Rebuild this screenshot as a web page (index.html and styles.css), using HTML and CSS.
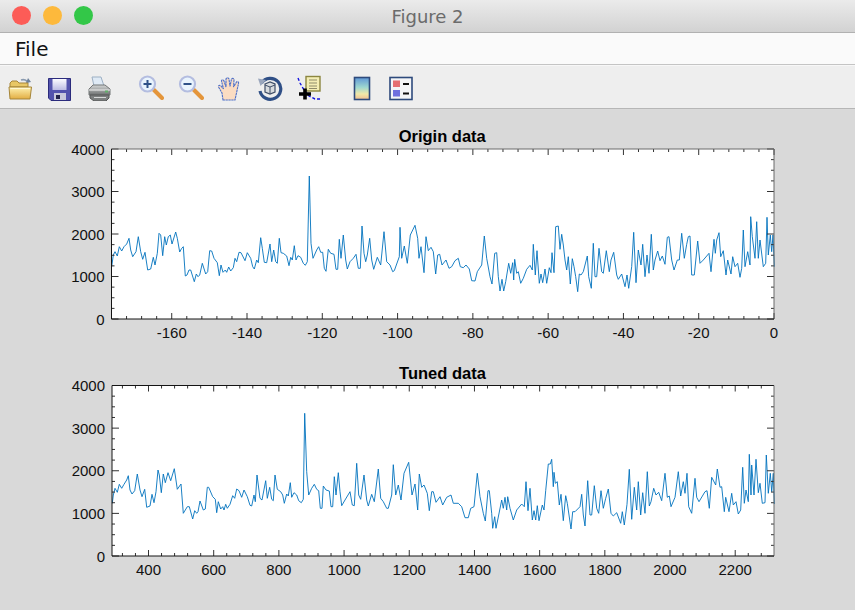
FILE: index.html
```html
<!DOCTYPE html>
<html lang="en">
<head>
  <meta charset="UTF-8">
  <meta name="viewport" content="width=device-width, initial-scale=1.0">
  <title>Figure 2</title>
  <link rel="stylesheet" href="styles.css">
</head>
<body>
  <div class="window">
    <div class="titlebar">
      <div class="lights">
        <span class="light close"></span>
        <span class="light minimize"></span>
        <span class="light zoom"></span>
      </div>
      <span class="window-title">Figure 2</span>
    </div>

    <div class="menubar"><span class="menu-item">File</span></div>

    <div class="toolbar">
      <span class="tool">
        <svg viewBox="0 0 26 26" width="26" height="26">
          <defs>
            <linearGradient id="folder-front" x1="0" y1="0" x2="0" y2="1">
              <stop offset="0" stop-color="#fff2b0"/>
              <stop offset="1" stop-color="#e2ad42"/>
            </linearGradient>
          </defs>
          <path d="M21 8 C20 5 17 4 14 5" fill="none" stroke="#8a9bb0" stroke-width="1.6"/>
          <path d="M21 3 L24 7 L19 8 Z" fill="#6f839c"/>
          <path d="M3 12 V8 L5 6 H10 L12 8 H21 V12 Z" fill="#e8c765" stroke="#a5853a"/>
          <path d="M2 12 H24.5 L23 24 H3 Z" fill="url(#folder-front)" stroke="#a5853a"/>
          <path d="M3.5 13.5 H23" stroke="#fff8d2"/>
        </svg>
      </span>
      <span class="tool">
        <svg viewBox="0 0 26 26" width="26" height="26">
          <defs>
            <linearGradient id="floppy-label" x1="0" y1="0" x2="0" y2="1">
              <stop offset="0" stop-color="#fbfbff"/>
              <stop offset="1" stop-color="#bcbce4"/>
            </linearGradient>
          </defs>
          <path d="M2.5 3.5 H24.5 V25.5 H5 L2.5 23 Z" fill="#5353ad" stroke="#2b2b7c"/>
          <rect x="6.5" y="4" width="14" height="11" fill="url(#floppy-label)"/>
          <rect x="8" y="18" width="12" height="7" fill="#c9c9dc"/>
          <rect x="10" y="20" width="4" height="4" fill="#22224a"/>
        </svg>
      </span>
      <span class="tool">
        <svg viewBox="0 0 26 26" width="26" height="26">
          <defs>
            <linearGradient id="printer-body" x1="0" y1="0" x2="0" y2="1">
              <stop offset="0" stop-color="#d4d6d6"/>
              <stop offset="1" stop-color="#6d7070"/>
            </linearGradient>
          </defs>
          <path d="M6 2 H15 L18 11 H8 Z" fill="#dfeaf5" stroke="#9db0c4"/>
          <path d="M3 14 L7 10 H19 L24 14 V20 H3 Z" fill="url(#printer-body)" stroke="#737676"/>
          <path d="M3 15 H24" stroke="#f2f2f2"/>
          <rect x="19" y="15.5" width="3" height="2" fill="#63b06a"/>
          <path d="M4 20 H23 V23 L20 26 H8 L4 23 Z" fill="#7c7f7f" stroke="#565858"/>
          <path d="M8 22.5 H20" stroke="#d6d8d8"/>
        </svg>
      </span>

      <span class="tool tool-gap">
        <svg viewBox="0 0 26 26" width="26" height="26">
          <path d="M16 15 L24 23" stroke="#e4953a" stroke-width="4" stroke-linecap="round"/>
          <circle cx="9.5" cy="9" r="7.5" fill="#e9f4fd" stroke="#b4bde0" stroke-width="2.2"/>
          <path d="M5.5 9 H13.5 M9.5 5 V13" stroke="#2f5288" stroke-width="2"/>
        </svg>
      </span>
      <span class="tool">
        <svg viewBox="0 0 26 26" width="26" height="26">
          <path d="M16 15 L24 23" stroke="#e4953a" stroke-width="4" stroke-linecap="round"/>
          <circle cx="9.5" cy="9" r="7.5" fill="#e9f4fd" stroke="#b4bde0" stroke-width="2.2"/>
          <path d="M5.5 9 H13.5" stroke="#2f5288" stroke-width="2"/>
        </svg>
      </span>
      <span class="tool">
        <svg viewBox="0 0 26 26" width="26" height="26">
          <path d="M6 25 L5 18 L1.5 12 C1 10 3 10 4 11 L6.5 14 L4.5 6 C4.5 4.5 6.5 4.5 7 6 L9 12 L9 4 C9.5 2.5 11.5 2.5 12 4 L13 11.5 L14.5 4 C15 3 17 3 17 5 L16.5 12 L19.5 7 C20.5 6 22 7 21.5 8.5 L19.5 18 L18 25 Z" fill="#fbdcc2" stroke="#4f70c8" stroke-width="1.1" stroke-dasharray="2.4 .5"/>
        </svg>
      </span>
      <span class="tool">
        <svg viewBox="0 0 26 26" width="26" height="26">
          <path d="M4.5 8 A10.5 10.5 0 1 1 3 16" fill="none" stroke="#2f4f86" stroke-width="3.2"/>
          <path d="M1 3.5 L9 5 L3.5 11 Z" fill="#9aa6bc"/>
          <path d="M8 9 L13 7 L18 9 V17 L13 19 L8 17 Z" fill="#d9dcdf" stroke="#3f4e68" stroke-width="1.2"/>
          <path d="M8 10 L13 12 L18 10 M13 12 V19" fill="none" stroke="#3f4e68"/>
        </svg>
      </span>
      <span class="tool">
        <svg viewBox="0 0 26 26" width="26" height="26">
          <path d="M2 3 L4 8 L8 15 L13 21 L19 24 H25" fill="none" stroke="#1414e0" stroke-width="1.4" stroke-dasharray="3 2"/>
          <rect x="10" y="1.5" width="14" height="14.5" fill="#f4eeb4" stroke="#8c8640" stroke-width="1.4"/>
          <path d="M13 5 H21 M13 8 H21 M13 11 H21 M13 13.5 H21" stroke="#8f8c6a"/>
          <path d="M3 19 H15 M9 13.5 V24.5" stroke="#000" stroke-width="3.6"/>
        </svg>
      </span>

      <span class="tool tool-gap">
        <svg viewBox="0 0 26 26" width="26" height="26">
          <defs>
            <linearGradient id="colorbar-fill" x1="0" y1="0" x2="0" y2="1">
              <stop offset="0" stop-color="#5f97d6"/>
              <stop offset=".45" stop-color="#9fd8d0"/>
              <stop offset=".75" stop-color="#f1e8a8"/>
              <stop offset="1" stop-color="#f0bd90"/>
            </linearGradient>
          </defs>
          <rect x="5.5" y="2.5" width="15" height="22" fill="url(#colorbar-fill)" stroke="#2e4a7c" stroke-width="1.6"/>
        </svg>
      </span>
      <span class="tool">
        <svg viewBox="0 0 26 26" width="26" height="26">
          <rect x="2" y="2.5" width="22" height="22" fill="#f4f5f7" stroke="#2e4a7c" stroke-width="1.6"/>
          <rect x="5" y="5.5" width="7" height="6.5" fill="#e56f72"/>
          <rect x="5" y="15" width="7" height="6.5" fill="#6f70df"/>
          <path d="M15 9 H21 M15 18.5 H21" stroke="#111" stroke-width="2"/>
        </svg>
      </span>
    </div>

    <div class="figure">
      <svg class="plot plot-origin" id="plot-origin" width="855" height="237"></svg>
      <svg class="plot plot-tuned" id="plot-tuned" width="855" height="237"></svg>
    </div>
  </div>

  <script src="chart.js"></script>
</body>
</html>
```

FILE: styles.css
```css
* {
  box-sizing: border-box;
}
html, body {
  margin: 0;
  padding: 0;
  background: #d9d9d9;
}
.window {
  width: 855px;
  height: 610px;
  display: flex;
  flex-direction: column;
  overflow: hidden;
}
.titlebar {
  height: 33px;
  flex: none;
  display: flex;
  align-items: center;
  justify-content: center;
  position: relative;
  background: linear-gradient(#ebebeb, #d2d2d2);
  border-bottom: 1px solid #b1b1b1;
}
.lights {
  position: absolute;
  left: 12px;
  top: 6px;
  display: flex;
  gap: 12px;
}
.light {
  width: 19px;
  height: 19px;
  border-radius: 50%;
}
.light.close {
  background: #fc5c57;
}
.light.minimize {
  background: #fdb93c;
}
.light.zoom {
  background: #33c748;
}
.window-title {
  font-family: "DejaVu Sans", sans-serif;
  font-size: 18px;
  color: #6b6b6b;
}
.menubar {
  height: 32px;
  flex: none;
  display: flex;
  align-items: center;
  padding-left: 15px;
  background: #fafafa;
  border-bottom: 1px solid #c4c4c4;
}
.menu-item {
  font-family: "DejaVu Sans", sans-serif;
  font-size: 20px;
  color: #111;
}
.toolbar {
  height: 44px;
  flex: none;
  display: flex;
  align-items: flex-start;
  padding-top: 9px;
  background: #eeeeee;
  border-top: 1px solid #f7f7f7;
  border-bottom: 1px solid #b6b6b6;
}
.tool {
  width: 39.5px;
  height: 26px;
  display: flex;
  justify-content: center;
}
.tool-gap {
  margin-left: 13px;
}
.figure {
  flex: 1;
  background: #d9d9d9;
  padding-top: 1px;
}
.plot {
  display: block;
}
.plot-origin {
  margin-bottom: 0;
}
.data-line {
  fill: none;
  stroke: #0072bd;
  stroke-width: 0.9;
  stroke-linejoin: round;
}
.axes-bg {
  fill: #fff;
}
.axis-dark {
  stroke: #141414;
  stroke-width: 1;
}
.axis-light {
  stroke: #6a6a6a;
  stroke-width: 1;
}
.tick {
  stroke: #333;
  stroke-width: 1;
}
.tick-label {
  font-family: "Liberation Sans", Arial, sans-serif;
  font-size: 15px;
  fill: #111;
}
.plot-title {
  font-family: "Liberation Sans", Arial, sans-serif;
  font-size: 16.5px;
  font-weight: bold;
  fill: #000;
  text-anchor: middle;
}
```

FILE: chart.js
```js
// traces read off the screenshot at 3x, [originX, originY, x, y, x, y, ...]
const originTrace = [
  [60, 120, 155,440,160,405,165,395,172,408,178,380,185,393,192,380,200,372,207,355,212,390,218,410,228,395,235,350,242,395,248,418,255,397,263,450,272,447,280,412,285,435,292,400,297,340,302,345,308,407,314,350,319,375,325,350,331,345,336,372,347,336,352,355,359,396,365,385,370,380,376,468,381,465,387,450,392,450,403,485,409,462,414,470,419,465,427,430,437,462,443,455,449,392,455,393,462,415,472,428,478,467,483,435,489,457,496,450,500,457,506,441,512,453,520,443,525,415,530,425,537,397,543,398,555,422,562,398,572,415,578,440,583,447,590,420,595,428,602,353,607,385,613,427,620,428,630,372,635,425,641,390,647,425,652,430,658,355,663,398,670,400,680,408,687,437,692,412,697,420,703,377,708,420,714,407,722,412,730,430,736,436,742,425,748,168,753,370,759,415,770,390,776,380,782,397,788,397,793,445,798,454,805,388,812,400,822,403,828,448,833,448,838,358,843,415,850,345,857,420,862,447,870,425,880,415,888,403,895,445],
  [350, 120, 31,445,36,318,42,400,47,425,52,405,59,355,65,420,71,448,82,412,92,435,102,335,110,425,120,435,128,455,133,452,148,410,150,322,155,415,163,378,172,430,181,345,195,316,203,355,207,415,213,380,222,458,228,350,235,392,243,382,250,395,257,462,263,405,269,403,276,435,288,420,297,445,305,440,315,422,325,415,331,440,340,443,348,435,358,447,365,482,375,483,382,455,395,435,403,348,410,415,420,470,426,492,434,400,440,398,445,470,450,513,456,478,461,513,467,485,476,430,482,460,488,428,491,480,494,418,500,460,505,455,512,490,520,475,530,448,540,436,547,450,550,373,556,465,561,392,568,490,573,462,578,488,585,447,590,490,598,443,603,458,606,398,612,458,617,320,625,318,630,388,635,343,640,375,645,420,650,450,655,410,661,492,667,416,672,440,677,470,683,515,688,462,693,465,700,455,712,408,716,470,724,505,730,370,735,470,740,470,747,385,755,455,760,460,769,392,778,455,783,420,791,397,800,465,805,478,815,462,825,500,831,465,836,505,845,440],
  [555, 120, 236,337,243,488,250,390,258,435,263,373,270,470,276,405,282,460,289,343,295,450,300,420,308,393,315,422,322,408,330,433,337,352,342,350,350,420,357,450,367,420,373,420,380,340,388,415,395,373,400,350,405,348,410,465,418,465,428,363,435,430,445,420,462,400,468,455,477,358,481,400,485,360,492,338,497,410,505,392,513,465,518,420,528,462,533,410,540,440,548,430,555,472,560,445,565,330,570,440,578,395,585,435,587,290,592,350,600,415,605,305,610,415,615,360,625,440,632,430,636,292,640,405,646,345,650,395,654,345,658,440]
];

const tunedTrace = [
  [60, 360, 157,430,160,405,165,385,172,397,178,373,185,385,192,373,200,360,205,347,210,390,216,402,224,392,232,342,240,390,246,410,254,388,260,442,270,438,276,403,282,428,288,395,294,330,298,345,304,398,310,342,316,368,324,338,332,362,343,326,352,388,363,372,370,460,382,440,388,440,398,477,404,452,410,460,414,455,420,423,430,450,436,447,442,382,446,382,458,410,466,418,470,458,475,425,482,447,488,440,492,450,497,433,502,445,510,433,518,407,524,415,530,387,537,392,545,412,552,390,562,410,570,436,575,438,582,405,586,425,591,345,600,415,606,420,617,362,622,415,629,382,635,418,640,422,645,345,652,388,662,395,668,405,673,430,680,402,685,408,691,368,695,412,702,398,710,405,716,422,724,428,730,418,734,160,740,335,746,405,755,385,763,373,770,388,776,392,781,445,786,445,790,378,798,390,808,393,813,440,818,440,823,350,828,405,835,338,840,395,845,437,855,420,870,395,877,435,883,437],
  [350, 360, 20,310,26,405,32,418,42,345,50,420,55,438,65,403,73,425,85,327,92,415,100,425,110,445,115,445,125,405,130,314,137,405,145,375,153,420,162,340,176,307,186,405,195,372,203,450,208,342,215,382,222,375,232,400,238,452,245,395,250,395,258,427,270,410,278,435,290,412,303,405,310,430,325,430,335,440,345,473,355,473,362,445,372,440,382,340,390,410,400,460,406,483,414,392,418,392,425,460,428,505,434,470,438,505,443,480,455,420,460,445,465,412,470,450,473,410,480,445,490,480,500,450,515,432,523,440,528,365,534,452,540,385,547,480,552,452,557,480,562,437,567,482,577,435,582,450,587,392,595,312,601,312,605,298,610,380,612,337,616,370,622,365,628,435,633,403,640,482,647,407,652,430,657,465,663,507,668,455,675,455,690,440,695,403,700,465,705,498,713,362,720,465,725,465,733,377,740,445,746,460,753,392,760,445,767,415,775,387,783,460,790,468,800,458,812,490,817,455,823,495,831,433],
  [555, 360, 223,328,230,478,238,382,245,450,250,365,257,465,263,398,270,460,277,335,283,438,288,425,296,385,303,405,311,397,320,422,330,340,337,412,343,408,348,440,360,412,370,335,377,408,385,365,390,400,396,340,401,440,410,460,420,355,425,412,432,425,450,395,456,392,463,445,470,352,482,375,487,327,495,382,500,380,508,455,512,412,522,455,530,400,535,435,543,425,550,462,557,450,563,322,568,430,573,390,580,425,583,283,588,405,590,315,597,405,603,298,610,398,615,370,622,430,630,428,634,285,640,400,646,340,650,395,655,340,658,432]
];

const plots = [
  {
    id: "plot-origin", title: "Origin data", top: 110,
    box: { left: 111.5, right: 774, top: 149, bottom: 319 },
    xMin: -176, xMax: 0, xMajor: 20, xMinor: 4,
    trace: originTrace, topClass: "axis-light"
  },
  {
    id: "plot-tuned", title: "Tuned data", top: 347,
    box: { left: 112, right: 774, top: 385.5, bottom: 556 },
    xMin: 288, xMax: 2319, xMajor: 200, xMinor: 40,
    trace: tunedTrace, topClass: "axis-dark"
  }
];

const SVG_NS = "http://www.w3.org/2000/svg";

function add(svg, tag, attrs, text) {
  const el = document.createElementNS(SVG_NS, tag);
  for (const key in attrs) el.setAttribute(key, attrs[key]);
  if (text !== undefined) el.textContent = text;
  svg.appendChild(el);
  return el;
}

function tickLine(svg, x1, y1, x2, y2) {
  add(svg, "line", { class: "tick", x1: x1, y1: y1, x2: x2, y2: y2 });
}

function drawPlot(plot) {
  const svg = document.getElementById(plot.id);
  const dy = plot.top;
  const left = plot.box.left, right = plot.box.right;
  const top = plot.box.top - dy, bottom = plot.box.bottom - dy;

  add(svg, "rect", { class: "axes-bg", x: left, y: top, width: right - left, height: bottom - top });

  // data line first, axes stay on top of it
  let points = [];
  plot.trace.forEach(function (seg) {
    for (let i = 2; i < seg.length; i += 2) {
      points.push((seg[0] + seg[i] / 3).toFixed(1) + "," + (seg[1] + seg[i + 1] / 3 - dy).toFixed(1));
    }
  });
  add(svg, "polyline", { class: "data-line", points: points.join(" ") });

  // x ticks
  const xScale = (right - left) / (plot.xMax - plot.xMin);
  const firstMinor = Math.ceil(plot.xMin / plot.xMinor) * plot.xMinor;
  for (let v = firstMinor; v <= plot.xMax; v += plot.xMinor) {
    const x = left + (v - plot.xMin) * xScale;
    const major = v % plot.xMajor === 0;
    const len = major ? 6 : 3;
    tickLine(svg, x, top, x, top + len);
    tickLine(svg, x, bottom, x, bottom - len);
    if (major) {
      add(svg, "text", { class: "tick-label", x: x, y: bottom + 19, "text-anchor": "middle" }, v);
    }
  }

  // y ticks, 0 to 4000 with a minor every 250
  for (let v = 0; v <= 4000; v += 250) {
    const y = bottom - (v / 4000) * (bottom - top);
    const major = v % 1000 === 0;
    const len = major ? 7 : 3;
    tickLine(svg, left, y, left + len, y);
    tickLine(svg, right, y, right - len, y);
    if (major) {
      add(svg, "text", { class: "tick-label", x: left - 7, y: y + 5.5, "text-anchor": "end" }, v);
    }
  }

  add(svg, "line", { class: plot.topClass, x1: left, y1: top, x2: right, y2: top });
  add(svg, "line", { class: "axis-light", x1: right, y1: top, x2: right, y2: bottom });
  add(svg, "line", { class: "axis-dark", x1: left, y1: top, x2: left, y2: bottom });
  add(svg, "line", { class: "axis-dark", x1: left, y1: bottom, x2: right, y2: bottom });

  add(svg, "text", { class: "plot-title", x: (left + right) / 2 - 0.5, y: top - 7 }, plot.title);
}

plots.forEach(drawPlot);
```
